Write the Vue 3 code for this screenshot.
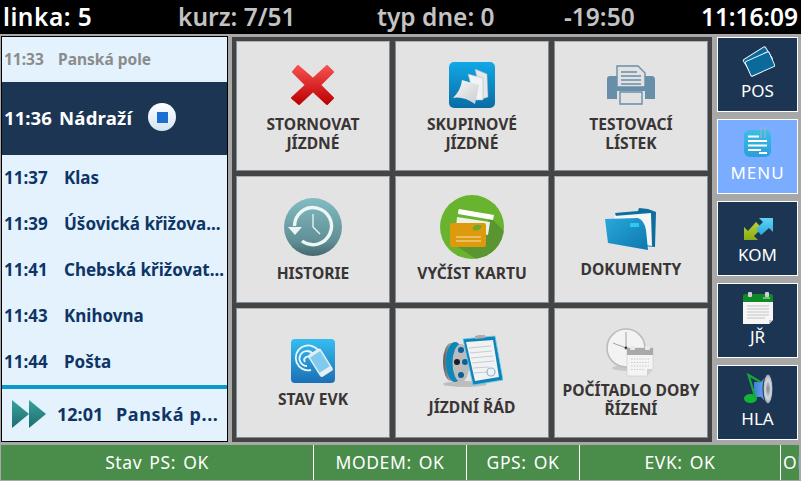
<script setup>
const stops = [
  { time: '11:37', name: 'Klas' },
  { time: '11:39', name: 'Úšovická křižova...' },
  { time: '11:41', name: 'Chebská křižovat...' },
  { time: '11:43', name: 'Knihovna' },
  { time: '11:44', name: 'Pošta' },
];

const statuses = [
  { key: 'ps', label: 'Stav PS:' },
  { key: 'modem', label: 'MODEM:' },
  { key: 'gps', label: 'GPS:' },
  { key: 'evk', label: 'EVK:' },
];
</script>

<template>
  <div class="screen">
    <header class="topbar">
      <span class="top-linka">linka: 5</span>
      <span class="top-dim top-kurz">kurz: 7/51</span>
      <span class="top-dim top-typ">typ dne: 0</span>
      <span class="top-dim top-delay">-19:50</span>
      <span class="top-clock">11:16:09</span>
    </header>

    <main class="main">
      <aside class="stops">
        <div class="stop-past"><span class="past-time">11:33</span>Panská pole</div>
        <div class="stop-active">
          <span class="active-time">11:36</span>
          <span class="active-name">Nádraží</span>
          <span class="stop-btn"><i></i></span>
        </div>
        <div v-for="stop in stops" :key="stop.time" class="stop-row">
          <span class="stop-time">{{ stop.time }}</span>{{ stop.name }}
        </div>
        <div class="stop-end">
          <svg width="34" height="30" viewBox="0 0 34 30">
            <defs>
              <linearGradient id="tri" x1="0" y1="0" x2="0" y2="1">
                <stop offset="0" stop-color="#37a39a" />
                <stop offset="1" stop-color="#1c6d72" />
              </linearGradient>
            </defs>
            <path d="M0 1 17 15 0 29Z" fill="url(#tri)" />
            <path d="M17 1 34 15 17 29Z" fill="url(#tri)" />
          </svg>
          <span class="end-time">12:01</span>
          <span class="end-name">Panská p...</span>
        </div>
      </aside>

      <section class="tiles">
        <button type="button" class="tile tile-storno">
          <svg width="44" height="50" viewBox="0 0 44 50">
            <defs>
              <linearGradient id="xred" x1="0" y1="0" x2="0" y2="1">
                <stop offset="0" stop-color="#f65050" />
                <stop offset="1" stop-color="#bd0000" />
              </linearGradient>
            </defs>
            <path d="M7 2 22 15 36 2 42 8 29 21 42 34 36 40 22 27 8 40 1 34 15 21 2 8Z" fill="url(#xred)" stroke="url(#xred)" stroke-width="2" stroke-linejoin="round" />
          </svg>
          <span>STORNOVAT<br />JÍZDNÉ</span>
        </button>

        <button type="button" class="tile tile-skupin">
          <svg width="46" height="52" viewBox="0 0 46 52">
            <defs>
              <linearGradient id="skblue" x1="0" y1="0" x2="0" y2="1">
                <stop offset="0" stop-color="#12a8e6" />
                <stop offset="1" stop-color="#0a6ca4" />
              </linearGradient>
              <linearGradient id="skpage" x1="0" y1="0" x2="1" y2="1">
                <stop offset="0" stop-color="#f7f7f7" />
                <stop offset="1" stop-color="#c9cdd0" />
              </linearGradient>
            </defs>
            <rect width="46" height="46" rx="5" fill="url(#skblue)" />
            <path d="M26 7 38 12 39 35 33 37Z" fill="#e6e8ea" stroke="#9fb4c2" stroke-width=".5" />
            <path d="M19 12 34 16 34 38 26 38Z" fill="#f2f3f4" stroke="#9fb4c2" stroke-width=".5" />
            <path d="M13 18 30 23 26 42Q14 34 4 36 12 28 13 18Z" fill="url(#skpage)" />
          </svg>
          <span>SKUPINOVÉ<br />JÍZDNÉ</span>
        </button>

        <button type="button" class="tile tile-test">
          <svg width="48" height="49" viewBox="0 0 48 49">
            <path d="M3 11H45Q48 11 48 15V34H38V26H10V34H0V14Q0 11 3 11Z" fill="#688fa9" />
            <path d="M10 1H31L38 8V22H10Z" fill="#e2e2e2" stroke="#688fa9" stroke-width="1.4" />
            <path d="M14 7H30M14 11H34M14 15H34M14 19H34" stroke="#688fa9" stroke-width="1.3" />
            <path d="M13 27H35V39H13Z" fill="#e2e2e2" stroke="#688fa9" stroke-width="1.4" />
          </svg>
          <span>TESTOVACÍ<br />LÍSTEK</span>
        </button>

        <button type="button" class="tile tile-hist">
          <svg width="60" height="65" viewBox="0 0 60 65">
            <defs>
              <linearGradient id="histc" x1="0" y1="0" x2="0" y2="1">
                <stop offset="0" stop-color="#82bcc2" />
                <stop offset=".75" stop-color="#5f8f95" />
                <stop offset="1" stop-color="#44686c" />
              </linearGradient>
            </defs>
            <circle cx="30" cy="29" r="29" fill="url(#histc)" />
            <path d="M11.500 28A18.500 18.500 0 1 1 19 43" fill="none" stroke="#eef5f5" stroke-width="3.400" />
            <path d="M5 29H19L12 37Z" fill="#eef5f5" />
            <path d="M30 16V29L37 36" fill="none" stroke="#eef5f5" stroke-width="1.300" />
          </svg>
          <span>HISTORIE</span>
        </button>

        <button type="button" class="tile tile-card">
          <svg width="64" height="68" viewBox="0 0 64 68">
            <defs>
              <clipPath id="cardc"><circle cx="32" cy="32" r="32" /></clipPath>
            </defs>
            <circle cx="32" cy="32" r="32" fill="#69b42f" />
            <path d="M46 30 50 22 64 36V64H36L18 52Z" fill="#5a9532" clip-path="url(#cardc)" />
            <path d="M17 22 50 27 48 40 16 34Z" fill="#eef2e6" />
            <path d="M19 14 54 20 53 25 18 19Q18 15 19 14Z" fill="#fff" />
            <path d="M12 28H44Q46 28 46 30V50Q46 52 44 52H12Q10 52 10 50V30Q10 28 12 28Z" fill="#dd9a0c" />
            <path d="M33 32Q37 28 42 31 39 37 33 35Z" fill="#6aa830" />
            <path d="M16 42H41M16 46H41" stroke="#f6e2b0" stroke-width="1.200" />
          </svg>
          <span>VYČÍST KARTU</span>
        </button>

        <button type="button" class="tile tile-docs">
          <svg width="52" height="53" viewBox="0 0 52 53">
            <defs>
              <linearGradient id="docf" x1="0" y1="0" x2="1" y2="1">
                <stop offset="0" stop-color="#2aa9dc" />
                <stop offset="1" stop-color="#0b77ad" />
              </linearGradient>
            </defs>
            <path d="M10 7 33 5 34 2 43 3 51 6 50 41 20 38Z" fill="#0c6d9e" />
            <path d="M9 10 46 7 47 40 20 36Z" fill="#f3f5f6" />
            <path d="M0 13 33 12Q39 14 41 24L43 44 3 37Z" fill="url(#docf)" />
            <path d="M25 17H34V21H25Z" fill="#2fc6f5" />
          </svg>
          <span>DOKUMENTY</span>
        </button>

        <button type="button" class="tile tile-evk">
          <svg width="44" height="50" viewBox="0 0 44 50">
            <defs>
              <linearGradient id="evkb" x1="0" y1="0" x2="0" y2="1">
                <stop offset="0" stop-color="#36bdf0" />
                <stop offset="1" stop-color="#1b6fb6" />
              </linearGradient>
            </defs>
            <rect width="44" height="44" rx="4" fill="url(#evkb)" />
            <g fill="none" stroke="#e8f6fd" stroke-width="1.800">
              <path d="M20 31A12.500 12.500 0 1 1 27 11" />
              <path d="M16 27A7.500 7.500 0 1 1 22 15" />
              <path d="M14 23A3 3 0 1 1 19 19" />
            </g>
            <g transform="rotate(-32 29 24)">
              <rect x="22" y="11" width="15" height="26" rx="2.500" fill="#e6eef2" />
              <rect x="23.500" y="14" width="12" height="18" fill="#7fcbf0" />
            </g>
          </svg>
          <span>STAV EVK</span>
        </button>

        <button type="button" class="tile tile-jr">
          <svg width="62" height="62" viewBox="0 0 62 62">
            <defs>
              <linearGradient id="reel" x1="0" y1="0" x2="1" y2="0">
                <stop offset="0" stop-color="#55595b" />
                <stop offset=".5" stop-color="#adb1b3" />
                <stop offset="1" stop-color="#6c7072" />
              </linearGradient>
            </defs>
            <ellipse cx="24" cy="49" rx="22" ry="3" fill="#bdbdbd" />
            <ellipse cx="10" cy="27" rx="8" ry="19" fill="url(#reel)" />
            <ellipse cx="14" cy="27" rx="9" ry="20" fill="#0f86b8" />
            <ellipse cx="20" cy="28" rx="8.500" ry="19" fill="#b8bcbe" />
            <circle cx="20" cy="15" r="3" fill="#0e5f95" />
            <circle cx="24" cy="27" r="3" fill="#0e5f95" />
            <circle cx="20" cy="40" r="3" fill="#0e5f95" />
            <circle cx="16" cy="27" r="3" fill="#1d1d1d" />
            <path d="M22 4 54 1 62 45 32 50Z" fill="#1181b6" stroke="#5fd2ea" stroke-width=".8" />
            <path d="M25 7 52 5 58 42 34 46Z" fill="#f0f2f3" />
            <path d="M28 13 50 11M29 18 51 16M30 23 52 21M31 28 53 26M32 33 48 32M33 38 46 37" stroke="#b9c3ca" stroke-width=".8" />
            <circle cx="50" cy="37" r="4" fill="none" stroke="#8db7d4" stroke-width="1.200" />
            <path d="M34 4 44 3 44 0 38 0 34 1Z" fill="#a9adb0" />
          </svg>
          <span>JÍZDNÍ ŘÁD</span>
        </button>

        <button type="button" class="tile tile-pocit">
          <svg width="50" height="52" viewBox="0 0 50 52">
            <ellipse cx="22" cy="40" rx="16" ry="3" fill="#c8c8c8" />
            <circle cx="20" cy="20" r="19" fill="#f3f3f3" stroke="#bcbcbc" stroke-width="1.600" />
            <path d="M20 4V20L7 15M20 20 26 24" fill="none" stroke="#8d8d8d" stroke-width=".8" />
            <circle cx="20" cy="20" r="1.400" fill="#333" />
            <path d="M21 20H47V41L41 48H21Z" fill="#f4f4f4" stroke="#c9c9c9" stroke-width=".6" />
            <path d="M21 20H47V27H21Z" fill="#a9a9a9" />
            <rect x="24" y="18" width="5" height="4" rx="1" fill="#e9e9e9" />
            <rect x="39" y="18" width="5" height="4" rx="1" fill="#e9e9e9" />
            <path d="M25 31H43M25 34.500H43M25 38H43M25 41.500H39" stroke="#c8c8c8" stroke-width="1.200" stroke-dasharray="1.400 1.400" />
            <path d="M41 48V41H47Z" fill="#d0d0d0" />
          </svg>
          <span>POČÍTADLO DOBY<br />ŘÍZENÍ</span>
        </button>
      </section>

      <nav class="side">
        <button type="button" class="side-btn">
          <svg width="34" height="36" viewBox="0 0 34 36">
            <g stroke="#fff" stroke-width=".9" fill="#0a6a9c">
              <rect x="4" y="7" width="26" height="15" rx="1.500" transform="rotate(-32 17 15)" />
              <rect x="6" y="11" width="26" height="16" rx="1.500" transform="rotate(-24 19 19)" />
            </g>
          </svg>
          <span>POS</span>
        </button>
        <button type="button" class="side-btn side-btn-on">
          <svg width="34" height="36" viewBox="0 0 34 36">
            <defs>
              <linearGradient id="menub" x1="0" y1="0" x2="0" y2="1">
                <stop offset="0" stop-color="#3bbfe6" />
                <stop offset="1" stop-color="#2b9ed9" />
              </linearGradient>
            </defs>
            <rect x="3" y="3" width="27" height="27" rx="6" fill="url(#menub)" />
            <path d="M7 9.500H18M7 14H26M7 18.500H26M7 23H20M18 26H26" stroke="#fff" stroke-width="2" />
            <path d="M20 11V3Q20 0 22 0 24 0 24 3V11" fill="none" stroke="#9fb6c4" stroke-width="1" />
          </svg>
          <span class="side-menu">MENU</span>
        </button>
        <button type="button" class="side-btn">
          <svg width="34" height="36" viewBox="0 0 34 36">
            <defs>
              <linearGradient id="kg" x1="0" y1="0" x2="0" y2="1">
                <stop offset="0" stop-color="#b9d22c" />
                <stop offset="1" stop-color="#8aaa1a" />
              </linearGradient>
              <linearGradient id="kb" x1="0" y1="0" x2="0" y2="1">
                <stop offset="0" stop-color="#5ed5f5" />
                <stop offset="1" stop-color="#2fa8dc" />
              </linearGradient>
            </defs>
            <path d="M3 18 3 31 17 31 13 27 21 19 15 13 7 22Z" fill="url(#kg)" />
            <path d="M18 9 32 9 32 23 28 19 20 26 15 20 22 13Z" fill="url(#kb)" />
          </svg>
          <span>KOM</span>
        </button>
        <button type="button" class="side-btn">
          <svg width="34" height="36" viewBox="0 0 34 36">
            <path d="M2 5Q2 3 4 3H30Q32 3 32 5V12H2Z" fill="#0d8a25" />
            <path d="M2 11H32V29L28 33H2Z" fill="#f5f6f5" />
            <path d="M6 15H28M6 18H28M6 21H28M6 24H28M6 27H24" stroke="#bcbcbc" stroke-width=".9" />
            <path d="M28 33V29H32Z" fill="#c9c9c9" />
            <rect x="7" y="1" width="4" height="5" rx="1" fill="#d0d0d0" />
            <rect x="24" y="1" width="4" height="5" rx="1" fill="#d0d0d0" />
            <path d="M22 7H29" stroke="#a9e0b0" stroke-width="1.200" />
          </svg>
          <span>JŘ</span>
        </button>
        <button type="button" class="side-btn">
          <svg width="34" height="36" viewBox="0 0 34 36">
            <defs>
              <linearGradient id="spk" x1="0" y1="0" x2="1" y2="0">
                <stop offset="0" stop-color="#3f7fd8" />
                <stop offset=".55" stop-color="#5f9be6" />
                <stop offset="1" stop-color="#aeb4ba" />
              </linearGradient>
              <radialGradient id="cone">
                <stop offset="0" stop-color="#7c8186" />
                <stop offset=".6" stop-color="#d6dade" />
                <stop offset="1" stop-color="#9aa0a6" />
              </radialGradient>
            </defs>
            <path d="M13 9H20L27 1V31L20 24H13Z" fill="url(#spk)" />
            <ellipse cx="27" cy="16" rx="5" ry="15" fill="url(#cone)" stroke="#14305c" stroke-width="1" />
            <ellipse cx="9.500" cy="25.500" rx="6.500" ry="4.500" fill="#12b436" />
            <path d="M14.500 25 7.500 2 19.500 9" fill="none" stroke="#13a838" stroke-width="2.200" />
          </svg>
          <span>HLA</span>
        </button>
      </nav>
    </main>

    <footer class="status">
      <div v-for="item in statuses" :key="item.key" class="status-cell" :class="'status-' + item.key">
        {{ item.label }}&nbsp;OK
      </div>
      <div class="status-cell status-last">OK</div>
    </footer>
  </div>
</template>

<style>
html,
body {
  margin: 0;
  background: #a8a8a8;
}
</style>

<style scoped>
.screen {
  width: 801px;
  height: 481px;
  overflow: hidden;
  background: #a8a8a8;
  font-family: 'Noto Sans', 'Open Sans', sans-serif;
  display: flex;
  flex-direction: column;
}

.topbar {
  height: 34px;
  flex: none;
  background: #000;
  color: #c3c3c3;
  font-size: 24.5px;
  font-weight: 600;
  line-height: 33px;
  display: grid;
  grid-template-columns: 178px 199px 187px 137px 100px;
  white-space: nowrap;
}

.top-linka {
  padding-left: 3px;
  color: #fff;
  letter-spacing: 0.5px;
}

.top-clock {
  color: #fff;
  letter-spacing: -0.1px;
}

.main {
  height: 409px;
  flex: none;
  margin-top: 2px;
  padding-left: 1px;
  display: flex;
}

.stops {
  width: 227px;
  height: 406px;
  flex: none;
  box-sizing: border-box;
  border: 1px solid #000;
  background: #e3f2fd;
  display: flex;
  flex-direction: column;
  font-weight: 700;
  color: #0f3466;
  white-space: nowrap;
}

.stop-past {
  box-sizing: border-box;
  height: 45px;
  flex: none;
  padding: 0 0 2px 2px;
  display: flex;
  align-items: center;
  color: #8b8b8b;
  font-size: 15.5px;
}

.past-time {
  width: 54px;
}

.stop-active {
  box-sizing: border-box;
  height: 73px;
  flex: none;
  padding: 0 0 3px 2px;
  display: flex;
  align-items: center;
  background: #1c3553;
  color: #fff;
  font-size: 18.6px;
}

.active-time {
  width: 55px;
}

.active-name {
  width: 89px;
  letter-spacing: 0.2px;
}

.stop-btn {
  width: 28px;
  height: 28px;
  border-radius: 50%;
  background: linear-gradient(#fff, #d4e4f4);
  display: flex;
  align-items: center;
  justify-content: center;
}

.stop-btn i {
  width: 11px;
  height: 11px;
  background: #1c6fd0;
}

.stop-row {
  box-sizing: border-box;
  height: 46px;
  flex: none;
  padding: 0 0 2px 2px;
  display: flex;
  align-items: center;
  font-size: 17px;
}

.stop-time {
  width: 60px;
}

.stop-end {
  flex: 1;
  border-top: 4px solid #0a9ac8;
  padding: 0 0 3px 10px;
  display: flex;
  align-items: center;
  font-size: 18px;
}

.end-time {
  width: 59px;
  margin-left: 11px;
}

.end-name {
  letter-spacing: 0.6px;
}

.tiles {
  width: 480px;
  height: 405px;
  flex: none;
  margin-left: 4px;
  margin-top: 1px;
  box-sizing: border-box;
  padding: 4px;
  background: #444;
  display: grid;
  grid-template-columns: 154px 154px 154px;
  grid-template-rows: 130px 127px 130px;
  gap: 5px;
}

.tile {
  box-sizing: border-box;
  margin: 0;
  border: 1px solid #7f8d9b;
  border-top-color: #a9b2ba;
  background: #e3e3e3;
  padding: 0;
  display: flex;
  flex-direction: column;
  align-items: center;
  justify-content: flex-start;
  font-family: inherit;
  font-size: 15.6px;
  font-weight: 700;
  line-height: 19px;
  color: #3a3535;
  text-align: center;
}

.tile span {
  margin-top: 1px;
}

.tile svg {
  display: block;
  flex: none;
}

.tile-storno { padding-top: 22px; }
.tile-skupin { padding-top: 20px; }
.tile-test { padding-top: 23px; }
.tile-hist { padding-top: 21px; }
.tile-card { padding-top: 18px; }
.tile-docs { padding-top: 29px; }
.tile-evk { padding-top: 30px; }
.tile-jr { padding-top: 26px; }
.tile-pocit { padding-top: 19px; }

.side {
  width: 81px;
  flex: none;
  margin-left: 5px;
  margin-top: 1px;
  display: flex;
  flex-direction: column;
  gap: 7px;
}

.side-btn {
  box-sizing: border-box;
  width: 81px;
  height: 75px;
  flex: none;
  margin: 0;
  border: 1px solid #fff;
  background: #1c3553;
  padding: 7px 0 0;
  display: flex;
  flex-direction: column;
  align-items: center;
  justify-content: flex-start;
  font-family: inherit;
  font-size: 17px;
  line-height: 20px;
  color: #fff;
}

.side-btn svg {
  display: block;
  flex: none;
}

.side-btn-on {
  background: #7aacff;
}

.side-menu {
  letter-spacing: 1px;
}

.status {
  height: 35px;
  flex: none;
  margin-left: 1px;
  margin-right: 2px;
  display: flex;
  color: #fff;
  font-size: 17.5px;
  letter-spacing: 0.6px;
  word-spacing: 2px;
  line-height: 35px;
  white-space: nowrap;
}

.status-cell {
  box-sizing: border-box;
  background: #4a8c4a;
  border-right: 1px solid #fff;
  text-align: center;
  flex: none;
  overflow: hidden;
}

.status-ps { width: 313px; }
.status-modem { width: 153px; }
.status-gps { width: 113px; }
.status-evk { width: 201px; }

.status-last {
  flex: 1;
  border-right: 0;
  padding-left: 2px;
  text-align: left;
}
</style>
